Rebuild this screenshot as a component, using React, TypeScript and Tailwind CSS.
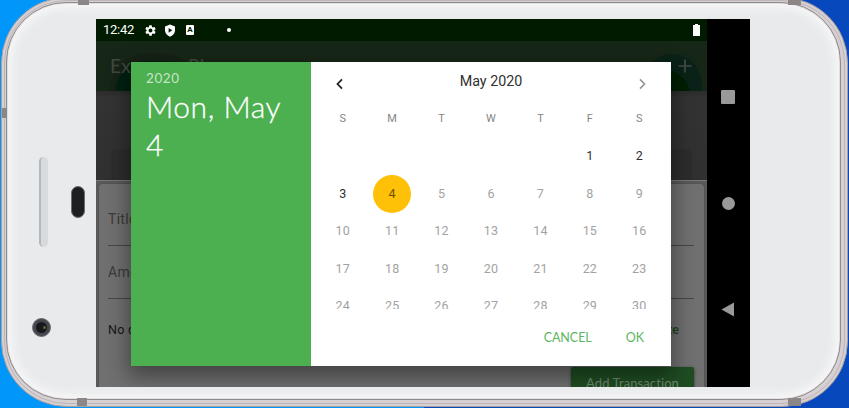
import React from "react";
import { MdSettings } from "react-icons/md";

const roboto = "font-[Roboto,'Liberation_Sans',sans-serif]";
const rounded = "font-[Lato,'Open_Sans',sans-serif]";
const weekdays = ["S", "M", "T", "W", "T", "F", "S"];
const days: (number | null)[] = [null, null, null, null, null, ...Array.from({ length: 30 }, (_, i) => i + 1)];

function StatusBar() {
  return (
    <div className="flex h-[22px] shrink-0 items-center bg-[#001b00] pl-[7px] pr-[7px] text-white">
      <span className="w-[41px] text-[13px] leading-[22px] tracking-[-0.25px]">12:42</span>
      <MdSettings className="size-[13px]" />
      <svg className="ml-[7px] h-[13px] w-[12px]" viewBox="0 0 12 13">
        <path d="M6 0.5 11 2.4V6.3Q11 10.7 6 12.7 1 10.7 1 6.3V2.4Z" fill="#fff" />
        <path d="M4.6 4 8.2 6.3 4.6 8.7Z" fill="#001b00" />
      </svg>
      <span className="ml-[10px] flex h-[10px] w-[8px] items-center justify-center rounded-[1px] bg-white text-[8px] font-bold leading-none text-[#001b00]">A</span>
      <span className="ml-[33px] size-[4px] rounded-full bg-white" />
      <svg className="ml-auto h-[12px] w-[7px]" viewBox="0 0 7 12">
        <path d="M2 0h3v1h2v11H0V1h2Z" fill="#fff" />
      </svg>
    </div>
  );
}

function ExpenseApp() {
  return (
    <div className="flex h-full w-[611px] flex-col overflow-hidden bg-[#333333]">
      <StatusBar />
      <div className="relative flex h-[50px] shrink-0 items-center justify-between overflow-hidden bg-[#172717] pl-[14px] pr-[15px] text-[#414841]">
        <div className="absolute left-[14px] top-[12px] h-[76px] w-[90px] rounded-[38px] bg-[#152215]" />
        <div className="absolute left-[20px] top-[20px] h-[60px] w-[80px] rounded-[30px] bg-[#002013]" />
        <div className="absolute right-[5px] top-[13px] h-[80px] w-[60px] rounded-[32px] bg-[#0a2217]" />
        <div className="absolute right-[17px] top-[29px] h-[60px] w-[60px] rounded-[26px] bg-[#001f00]" />
        <span className={`relative text-[19px] tracking-[0.4px] ${rounded}`}>Expense Planner</span>
        <svg className="relative size-[14px]" viewBox="0 0 14 14">
          <path d="M7 .5v13M.5 7h13" stroke="#454b48" strokeWidth="1.7" />
        </svg>
      </div>
      <div className="flex h-[89px] shrink-0 flex-col justify-end bg-gradient-to-b from-[#2c2c2c] via-[#333333] via-8% to-[#303030] px-[17px]">
        <div className="h-[29px] rounded-t-[4px] bg-[#2d2d2d] shadow-[0_0_3px_#222]" />
      </div>
      <div className="flex-1 border-t border-[#777777] bg-[#5c5c5c] px-[3px] pt-[3px]">
        <div className="flex h-[230px] flex-col rounded-t-[4px] bg-[#707070] pl-[9px] pr-[10px] shadow-[0_0_3px_#484848]">
          <div className="h-[62px] border-b border-[#464646] pt-[26px] text-[14px] leading-[18px] tracking-[0.3px] text-[#3b3b3b]">Title</div>
          <div className="h-[53px] border-b border-[#464646] pt-[17px] text-[14px] leading-[18px] tracking-[0.3px] text-[#3b3b3b]">Amount</div>
          <div className="flex h-[68px] items-center justify-between pb-[5px] text-[12.5px] text-[#151515]">
            <span className="tracking-[0.3px]">No date chosen!</span>
            <span className={`pr-[15px] font-bold text-[#174319] ${rounded}`}>Choose Date</span>
          </div>
          <div className={`flex h-[36px] w-[123px] shrink-0 items-center justify-center self-end rounded-[2px] bg-[#1f4d22] pb-[3px] text-[13px] tracking-[0.1px] text-[#718a72] shadow-[0_1px_3px_#333] ${rounded}`}>Add Transaction</div>
        </div>
      </div>
    </div>
  );
}

function DatePicker() {
  return (
    <div className="absolute left-[35px] top-[43px] flex h-[304px] w-[540px] bg-white shadow-[0_8px_20px_3px_rgba(0,0,0,0.4)]">
      <div className={`w-[180px] bg-[#4caf50] pl-[15px] pt-[8px] text-white ${rounded}`}>
        <div className="text-[13.5px] leading-[17px] tracking-[0.55px] text-[#c5e5c6]">2020</div>
        <div className="text-[30px] font-light leading-[38px] tracking-[0.55px] [-webkit-text-stroke:0.3px_white]">Mon, May<br />4</div>
      </div>
      <div className="flex w-[360px] flex-col">
        <div className="flex h-[38px] items-center justify-between px-[23px] text-[#303030]">
          <svg className="mt-[6px] h-[12px] w-[12px]" viewBox="0 0 12 12">
            <path d="M8 1.3 3.5 6 8 10.7" fill="none" stroke="#222" strokeWidth="1.8" />
          </svg>
          <span className="text-[14.3px] leading-[38px]">May 2020</span>
          <svg className="mt-[6px] h-[12px] w-[12px]" viewBox="0 0 12 12">
            <path d="M4 1.3 8.5 6 4 10.7" fill="none" stroke="#999" strokeWidth="1.8" />
          </svg>
        </div>
        <div className="grid h-[209px] auto-rows-[37.5px] grid-cols-7 overflow-hidden px-[7px]">
          {weekdays.map((d, i) => (
            <span key={i} className="flex items-center justify-center text-[11px] text-[#858585]">{d}</span>
          ))}
          {days.map((d, i) => (
            <span key={`d${i}`} className="flex items-center justify-center">
              {d === 4 ? (
                <span className="flex size-[37.5px] items-center justify-center rounded-full bg-[#ffc107] pt-[1px] text-[12.5px] text-[#6b5100]">4</span>
              ) : (
                <span className={d && d < 4 ? "pt-[1px] text-[12.5px] text-[#303030]" : "pt-[1px] text-[12.5px] tracking-[0.2px] text-[#a2a2a2]"}>{d}</span>
              )}
            </span>
          ))}
        </div>
        <div className={`flex flex-1 justify-end gap-[34px] pr-[27px] pt-[20px] text-[12.5px] leading-[18px] text-[#5cb660] ${rounded}`}>
          <span className="tracking-[-0.05px]">CANCEL</span>
          <span>OK</span>
        </div>
      </div>
    </div>
  );
}

function NavigationBar() {
  return (
    <div className="flex w-[43px] flex-col items-center bg-black">
      <span className="mt-[71px] mr-px size-[14px] rounded-[1px] bg-[#999]" />
      <span className="mt-[93px] size-[13px] rounded-full bg-[#999]" />
      <svg className="mr-[2px] mt-[92px] h-[15px] w-[14px]" viewBox="0 0 14 15">
        <path d="M0.5 7.5 13 .5v14Z" fill="#999" />
      </svg>
    </div>
  );
}

export default function App() {
  return (
    <div className={`h-[408px] w-[849px] overflow-hidden bg-gradient-to-r from-[#0096fa] from-50% to-[#0748bd] to-50% ${roboto}`}>
      <div className="relative ml-px mt-[-3px] h-[410px] w-[847px] rounded-[66px] border border-[#aaa0a0] bg-[#d7d0d2] p-[2px]">
        <div className="absolute left-[76px] top-0 h-[7px] w-[11px] bg-[#8d8687]" />
        <div className="absolute left-[786px] top-0 h-[7px] w-[13px] bg-[#8d8687]" />
        <div className="absolute bottom-0 left-[75px] h-[8px] w-[10px] bg-[#8d8687]" />
        <div className="absolute bottom-0 left-[786px] h-[8px] w-[13px] bg-[#8d8687]" />
        <div className="absolute left-0 top-[110px] h-[10px] w-[5px] bg-[#8d8687]" />
        <div className="h-full rounded-[63px] border border-[#bdb5b7] p-px pb-[3px] pr-[3px]">
          <div className="h-full rounded-[60px] border border-[#8f898b] bg-[#e0dfe1] p-px">
            <div className="flex h-full rounded-[58px] bg-[#e9eaec] shadow-[inset_0_0_9px_4px_#f7f7f8]">
              <div className="relative w-[88px] shrink-0">
                <div className="absolute left-[31px] top-[153px] h-[90px] w-[9px] rounded-full border-l-2 border-[#b2b8be] bg-[#d8dbde]" />
                <div className="absolute left-[63px] top-[182px] h-[32px] w-[14px] rounded-full border border-[#6c6d6f] bg-[#1e1f22]" />
                <div className="absolute left-[24px] top-[314px] flex size-[19px] items-center justify-center rounded-full border border-[#6a6c70] bg-[#44474d]">
                  <span className="flex size-[11px] items-center justify-center rounded-full bg-[#15181d]">
                    <span className="ml-[5px] size-[3px] rounded-full bg-[#66662e]" />
                  </span>
                </div>
              </div>
              <div className="relative mt-[15px] flex h-[368px] w-[654px] shrink-0 overflow-hidden">
                <ExpenseApp />
                <div className="absolute left-0 top-0 h-[368px] w-[611px] overflow-hidden">
                  <DatePicker />
                </div>
                <NavigationBar />
              </div>
            </div>
          </div>
        </div>
      </div>
    </div>
  );
}
